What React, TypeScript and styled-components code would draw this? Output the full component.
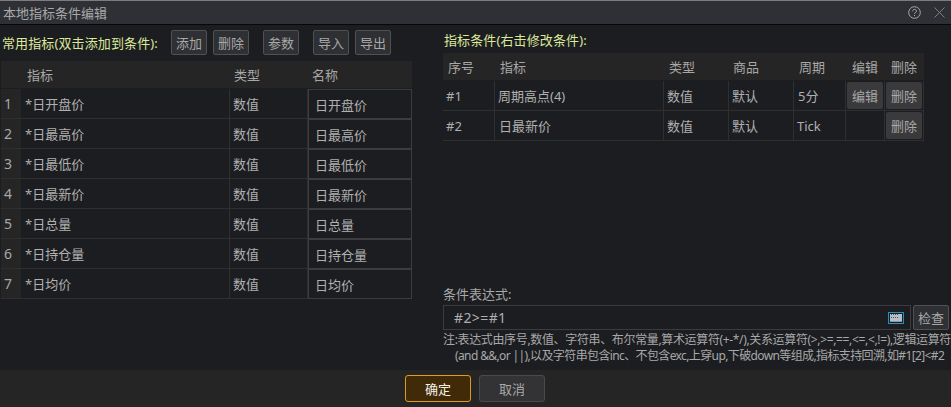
import React from "react";
import styled, { createGlobalStyle } from "styled-components";

const Global = createGlobalStyle`
  html, body { margin: 0; padding: 0; background: #1c1d21; }
  body { font-family: "Noto Sans", "Noto Sans CJK SC", sans-serif; font-size: 13px; color: #b4b4b4; }
`;

const Dialog = styled.div`
  width: 951px; height: 407px; display: flex; flex-direction: column; overflow: hidden;
  background: #1c1d21;
`;
const TitleBar = styled.header`
  height: 25px; box-sizing: border-box; flex: none; display: flex; align-items: center; justify-content: space-between;
  background: #2e3035; border-top: 1px solid #7c7c7c; border-bottom: 1px solid #08080a;
  padding: 0 6px 0 3px; font-size: 13px; color: #a9a9a9;
`;
const TitleIcons = styled.div`display: flex; align-items: center; gap: 13px;`;
const Body = styled.main`flex: 1; min-height: 0; display: flex;`;
const LeftPane = styled.section`width: 443px; flex: none; padding-left: 1px; box-sizing: border-box;`;
const RightPane = styled.section`flex: 1; display: flex; flex-direction: column; min-width: 0;`;
const Toolbar = styled.div`height: 36px; box-sizing: border-box; padding: 5px 0 0 1px; display: flex; align-items: flex-start;`;
const Legend = styled.span`
  color: #dde899; font-size: 13px; white-space: nowrap; letter-spacing: 0.12px;
`;
const ToolLegend = styled(Legend)`width: 169px; flex: none; height: 25px; display: flex; align-items: center;`;
const ToolButton = styled.button<{ $after?: number }>`
  width: 36px; height: 25px; padding: 0; font: inherit; font-size: 13px; color: #a8a8a8;
  background: #2f3033; border: 1px solid #505052; border-radius: 2px; margin-right: ${(p) => p.$after ?? 6}px;
`;
const Grid = styled.div<{ $cols: string; $width: number }>`
  display: grid; grid-template-columns: ${(p) => p.$cols}; width: ${(p) => p.$width}px;
`;
const Head = styled.div<{ $pad?: number }>`
  height: 27px; margin-bottom: 1px; display: flex; align-items: center; background: #252525; color: #a8a8a8;
  padding-left: ${(p) => p.$pad ?? 6}px; white-space: nowrap; overflow: hidden;
`;
const Index = styled.div`
  height: 29px; display: flex; align-items: center; background: #252525; padding-left: 3px;
  color: #a8a8a8; border-bottom: 1px solid #2f2f2f; font-size: 14px;
`;
const Cell = styled.div<{ $pad?: number }>`
  height: 29px; display: flex; align-items: center; padding-left: ${(p) => p.$pad ?? 3}px;
  border-bottom: 1px solid #2f2f2f; border-right: 1px solid #2f2f2f;
  white-space: nowrap; overflow: hidden; color: #b0b0b0;
`;
const NameCell = styled.div`
  height: 30px; box-sizing: border-box; background: #1c1d21; display: flex; align-items: center;
  padding-left: 6px; border: 1px solid #3c3c3e; outline: 1px solid #1c1d21; outline-offset: -2px;
  color: #b0b0b0;
`;
const CellButton = styled.button`
  width: 36px; height: 27px; padding: 0; font: inherit; color: #a8a8a8;
  background: #3a3a3c; border: 0; border-radius: 2px;
`;
const ButtonCell = styled.div`
  height: 29px; display: flex; align-items: center; justify-content: center;
  border-bottom: 1px solid #2f2f2f; border-right: 1px solid #2f2f2f; overflow: hidden;
`;
const RightLegend = styled(Legend)`height: 28px; display: flex; align-items: center; margin-left: 1px;`;
const ExprBlock = styled.div`margin-top: auto; padding-bottom: 6px;`;
const ExprLabel = styled.div`height: 17px; display: flex; align-items: center; color: #a8a8a8;`;
const ExprRow = styled.div`display: flex; align-items: center; gap: 2px; margin-top: 3px;`;
const ExprField = styled.div`
  width: 450px; height: 23px; display: flex; align-items: center; justify-content: space-between;
  border: 1px solid #3c3c3e; padding: 0 6px 0 10px; color: #b0b0b0; font-size: 14px;
  letter-spacing: 0.4px;
`;
const CheckButton = styled(ToolButton)`margin: 0; height: 25px; width: 36px;`;
const Note = styled.div`
  margin-top: 2px; font-size: 12px; line-height: 16px; color: #a8a8a8; white-space: nowrap;
`;
const NoteLine = styled.p<{ $indent?: number; $tracking: number }>`
  margin: 0; padding-left: ${(p) => p.$indent ?? 0}px; letter-spacing: ${(p) => p.$tracking}px;
`;
const Footer = styled.footer`
  height: 37px; flex: none; display: flex; align-items: center; justify-content: center; gap: 8px;
  background: #252525; box-sizing: border-box; padding-right: 1px;
`;
const FooterButton = styled.button<{ $primary?: boolean }>`
  width: 66px; height: 27px; padding: 0; font: inherit; font-size: 13px;
  color: ${(p) => (p.$primary ? "#f4f0e6" : "#a8a8a8")};
  background: ${(p) => (p.$primary ? "#412a08" : "#333335")};
  border: 1px solid ${(p) => (p.$primary ? "#e09a1e" : "#4a4a4c")}; border-radius: 3px;
`;

const rows = [
  ["*日开盘价", "日开盘价"], ["*日最高价", "日最高价"], ["*日最低价", "日最低价"], ["*日最新价", "日最新价"],
  ["*日总量", "日总量"], ["*日持仓量", "日持仓量"], ["*日均价", "日均价"],
];

const HelpIcon = () => (
  <svg width="13" height="13" viewBox="0 0 13 13" fill="none" stroke="#a9a9a9" strokeWidth="1">
    <circle cx="6.500" cy="6.500" r="5.800" />
    <path d="M4.600 5.200c0-1.200.9-1.800 1.900-1.800s1.900.6 1.900 1.700c0 1.400-1.900 1.500-1.900 2.900" />
    <path d="M6.500 9v1" />
  </svg>
);
const CloseIcon = () => (
  <svg width="11" height="11" viewBox="0 0 11 11" stroke="#7d7e82" strokeWidth="1"><path d="M.5.5l10 10M10.500.5l-10 10" /></svg>
);
const KeyboardIcon = () => (
  <svg width="16" height="12" viewBox="0 0 16 12" shapeRendering="crispEdges">
    <rect x=".5" y=".5" width="15" height="11" fill="none" stroke="#1f8fd0" />
    <rect x="2" y="2" width="12" height="7" fill="#b9bcc0" />
    <path d="M3 2.500h1M5 2.500h1M7 2.500h1M9 2.500h1M3 5h1M5 5h1M7 5h1M9 5h1" stroke="#50535a" strokeWidth="1" />
    <rect x="2" y="9" width="12" height="1" fill="#8f9297" />
  </svg>
);

export default function App() {
  const leftCols = "20px 209px 78px 104px";
  const rightCols = "52px 169px 65px 65px 52px 39px 39px";
  return (
    <Dialog>
      <Global />
      <TitleBar>
        <span>本地指标条件编辑</span>
        <TitleIcons><HelpIcon /><CloseIcon /></TitleIcons>
      </TitleBar>
      <Body>
        <LeftPane>
          <Toolbar>
            <ToolLegend>常用指标(双击添加到条件):</ToolLegend>
            <ToolButton>添加</ToolButton>
            <ToolButton $after={14}>删除</ToolButton>
            <ToolButton $after={14}>参数</ToolButton>
            <ToolButton>导入</ToolButton>
            <ToolButton>导出</ToolButton>
          </Toolbar>
          <Grid $cols={leftCols} $width={411}>
            <Head />
            <Head $pad={6}>指标</Head>
            <Head $pad={4}>类型</Head>
            <Head $pad={4}>名称</Head>
            {rows.map(([name, label], i) => (
              <React.Fragment key={name}>
                <Index>{i + 1}</Index>
                <Cell $pad={4}>{name}</Cell>
                <Cell $pad={3}>数值</Cell>
                <NameCell>{label}</NameCell>
              </React.Fragment>
            ))}
          </Grid>
        </LeftPane>
        <RightPane>
          <RightLegend>指标条件(右击修改条件):</RightLegend>
          <Grid $cols={rightCols} $width={481}>
            <Head $pad={5}>序号</Head>
            <Head $pad={5}>指标</Head>
            <Head $pad={5}>类型</Head>
            <Head $pad={4}>商品</Head>
            <Head $pad={5}>周期</Head>
            <Head $pad={6}>编辑</Head>
            <Head $pad={6}>删除</Head>
            <Cell>#1</Cell>
            <Cell>周期高点(4)</Cell>
            <Cell>数值</Cell>
            <Cell>默认</Cell>
            <Cell $pad={4}>5分</Cell>
            <ButtonCell><CellButton>编辑</CellButton></ButtonCell>
            <ButtonCell><CellButton>删除</CellButton></ButtonCell>
            <Cell>#2</Cell>
            <Cell $pad={4}>日最新价</Cell>
            <Cell>数值</Cell>
            <Cell>默认</Cell>
            <Cell>Tick</Cell>
            <Cell />
            <ButtonCell><CellButton>删除</CellButton></ButtonCell>
          </Grid>
          <ExprBlock>
            <ExprLabel>条件表达式:</ExprLabel>
            <ExprRow>
              <ExprField>#2&gt;=#1<KeyboardIcon /></ExprField>
              <CheckButton>检查</CheckButton>
            </ExprRow>
            <Note>
              <NoteLine $tracking={-0.35}>注:表达式由序号,数值、字符串、布尔常量,算术运算符(+-*/),关系运算符(&gt;,&gt;=,==,&lt;=,&lt;,!=),逻辑运算符</NoteLine>
              <NoteLine $indent={12} $tracking={-0.62}>(and &amp;&amp;,or ||),以及字符串包含inc、不包含exc,上穿up,下破down等组成,指标支持回溯,如#1[2]&lt;#2</NoteLine>
            </Note>
          </ExprBlock>
        </RightPane>
      </Body>
      <Footer>
        <FooterButton $primary>确定</FooterButton>
        <FooterButton>取消</FooterButton>
      </Footer>
    </Dialog>
  );
}
